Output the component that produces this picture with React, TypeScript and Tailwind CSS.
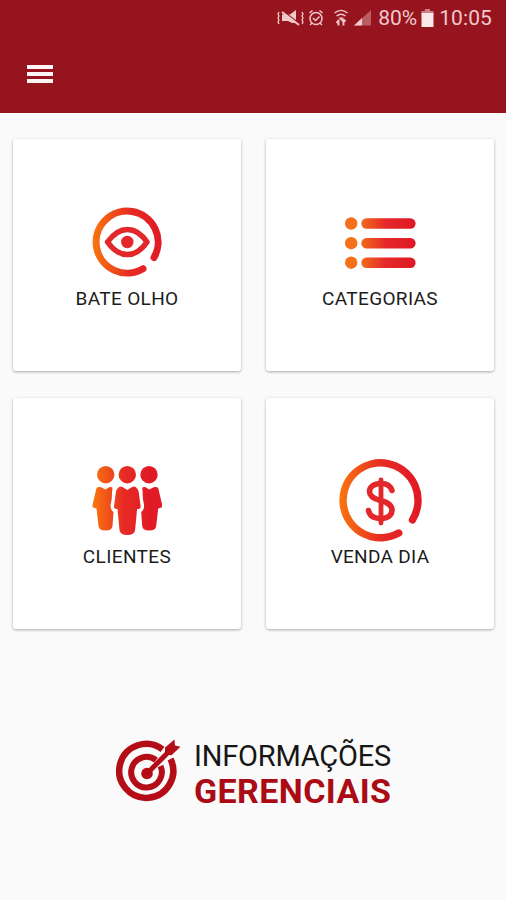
import type { ReactNode } from 'react'

/**
 * Home - main menu with the four report cards
 */

function StatusBar() {
  return (
    <div className="flex h-9 items-center justify-end pr-[14px] text-[#f0c9cc]">
      <svg className="h-5 w-[96px] shrink-0" viewBox="0 0 96 20" fill="none" stroke="currentColor" strokeWidth="1.5">
        {/* Mute + vibrate */}
        <path d="M2 4l-1 2 1 2-1 2 1 2-1 2 1 2M25 4l1 2-1 2 1 2-1 2 1 2-1 2" strokeWidth="1.300" />
        <path d="M5 6.500h4l4 0 6-4.500v13l-4 0-4-2H5z" fill="currentColor" stroke="none" />
        <path d="M6 3l17 13" stroke="#96141e" strokeWidth="1.200" />
        <path d="M5 4l17 13" strokeWidth="2" />
        {/* Alarm */}
        <circle cx="39" cy="10.500" r="6" />
        <path d="M36 10l2.500 2.500 4-4M32.500 5l3-2.500M45.500 5l-3-2.500M35 15l-2 2M43 15l2 2" />
        {/* Wifi */}
        <path d="M57.500 5c4-3.300 9-3.300 13 0M59.500 8c3-2.300 6-2.300 9 0" strokeWidth="1.300" />
        <path d="M61.500 9.500h5l-2.500 3z" fill="currentColor" stroke="none" />
        <path d="M61.500 11.500v6M59.500 15l2-2.500M66.500 17.500v-6M64.500 13l2-1.500 2 2" strokeWidth="1.900" />
        {/* Signal */}
        <path d="M94 2v15.500H77z" fill="currentColor" opacity=".4" stroke="none" />
        <path d="M85 10v7.500h-8z" fill="currentColor" stroke="none" />
      </svg>
      <span className="ml-[5px] text-[21px] leading-9">80%</span>
      <svg className="ml-[4px] h-[18px] w-[13px] shrink-0" viewBox="0 0 13 18">
        <path d="M4 0h5v2h3.500v4H.5V2H4z" fill="currentColor" opacity=".6" />
        <path d="M.5 4h12v14H.5z" fill="#fbe9ea" />
      </svg>
      <span className="ml-[5px] text-[21px] leading-9 tracking-[0.1px]">10:05</span>
    </div>
  )
}

function Gradient({ id, from, to }: { id: string; from: number; to: number }) {
  return (
    <defs>
      <linearGradient id={id} gradientUnits="userSpaceOnUse" x1={from} x2={to} y1="0" y2="0">
        <stop offset="0" stopColor="#f9780e" />
        <stop offset=".55" stopColor="#e72b24" />
        <stop offset="1" stopColor="#e11a25" />
      </linearGradient>
    </defs>
  )
}

function EyeIcon() {
  return (
    <svg className="h-[70px] w-[70px]" viewBox="0 0 70 70" fill="none" stroke="url(#eye)" strokeLinecap="round">
      <Gradient id="eye" from={0} to={70} />
      <path d="M62 50.500A31 31 0 1 0 51 61.700" strokeWidth="7" />
      <g stroke="#e3272a">
        <path d="M15.500 35c12-16.800 28-16.800 39.500 0c-11.500 16.800-27.500 16.800-39.500 0z" strokeWidth="5.500" strokeLinejoin="round" />
        <circle cx="35.300" cy="35" r="6.200" fill="#e3272a" stroke="none" />
      </g>
    </svg>
  )
}

function ListIcon() {
  return (
    <svg className="mt-[2px] h-[52px] w-[72px]" viewBox="0 0 72 52">
      <defs>
        <linearGradient id="bar">
          <stop offset="0" stopColor="#f26a1b" />
          <stop offset=".45" stopColor="#e5282a" />
          <stop offset="1" stopColor="#e01725" />
        </linearGradient>
      </defs>
      {[6.5, 26.2, 45.7].map((y) => (
        <g key={y}>
          <circle cx="7.200" cy={y} r="6.200" fill="#f6701a" />
          <rect x="17.300" y={y - 5.2} width="54.300" height="10.400" rx="5.200" fill="url(#bar)" />
        </g>
      ))}
    </svg>
  )
}

function PeopleIcon() {
  return (
    <svg className="h-[72px] w-[70px]" viewBox="0 0 70 72" fill="url(#people)">
      <Gradient id="people" from={0} to={58} />
      <circle cx="13.700" cy="9.700" r="8.700" />
      <circle cx="35.300" cy="9.700" r="8.700" />
      <circle cx="57" cy="9.700" r="8.700" />
      <path d="M4.500 23q1.500-1.500 4-1L13.500 24.500l4-2.500q2.500-.5 3 1c-1 5 0 10-1.500 15-1 4 0 7 2.500 9l-1 14q-.5 4.500-7 4.500t-7-4.500l-2-17.500-3-1q-1.500-.5-1-2.500z" />
      <path d="M66.200 23q-1.500-1.500-4-1L57.200 24.500l-4-2.500q-2.500-.5-3 1c1 5 0 10 1.500 15 1 4 0 7-2.500 9l1 14q.5 4.500 7 4.500t7-4.500l2-17.500 3-1q1.500-.5 1-2.500z" />
      <path d="M26.500 22.500q1.500-1.500 4-.5l4.800 3 4.800-3q2.500-1 4 .5 2 1.500 2.500 4l2 14.500q.3 3-3.500 3l-2 21q-.5 5-7.800 5t-7.800-5l-2-21q-3.800 0-3.500-3l2-14.500q.5-2.500 2.500-4z" />
    </svg>
  )
}

function DollarIcon() {
  return (
    <svg className="h-[84px] w-[84px]" viewBox="0 0 84 84" fill="none" stroke="url(#dollar)" strokeLinecap="round">
      <Gradient id="dollar" from={0} to={80} />
      <path d="M74.500 60.900A37.500 37.500 0 1 0 60.700 74.100" strokeWidth="7.400" />
      <g stroke="#e3272a">
        <path d="M54 31.500c-1.500-5-5.500-7-11-7-7 0-11.500 3.500-11.500 8 0 5.500 5 7.500 11 9 7 1.800 11.500 4 11.500 9.500 0 5-4 8.500-11 8.500-7 0-11.500-3-12.500-8" strokeWidth="5.600" />
        <path d="M43 21v43" strokeWidth="4.800" />
      </g>
    </svg>
  )
}

function TargetIcon() {
  return (
    <svg className="h-[66px] w-[65px] shrink-0" viewBox="0 0 65 66" fill="none" stroke="#b40d17">
      <path d="M46.500 10.300A27 27 0 1 0 54.500 20" strokeWidth="6.500" />
      <path d="M40 21.200A15.300 15.300 0 1 0 44.500 27" strokeWidth="6" />
      <circle cx="31" cy="34.500" r="5.800" fill="#b40d17" stroke="none" />
      <path d="M31 34.500l23-23" strokeWidth="5" />
      <path d="M49 8.500L58.500.5l.5 6 5.500 1.300-9 8.500-6.500-1z" fill="#b40d17" stroke="none" />
    </svg>
  )
}

interface MenuCardProps {
  label: string
  icon: ReactNode
  textClass: string
}

function MenuCard({ label, icon, textClass }: MenuCardProps) {
  return (
    <button className="flex flex-col items-center rounded-[3px] bg-white pt-[60px] shadow-[0_1px_3px_rgba(0,0,0,0.32)]">
      <span className="flex h-[86px] items-center justify-center">{icon}</span>
      <span className={`whitespace-nowrap text-[19px] leading-[24px] text-[#1c1c1c] ${textClass}`}>{label}</span>
    </button>
  )
}

export default function App() {
  return (
    <div className="flex h-[900px] w-[506px] flex-col overflow-hidden bg-[#fafafa] font-['Roboto',sans-serif]">
      <header className="h-[113px] shrink-0 bg-[#96141e]">
        <StatusBar />
        <button className="ml-[27px] mt-[29px] flex w-[26px] flex-col gap-[3px]" aria-label="Menu">
          <span className="h-1 w-full bg-[#fff5f5]" />
          <span className="h-1 w-full bg-[#fff5f5]" />
          <span className="h-1 w-full bg-[#fff5f5]" />
        </button>
      </header>

      <main className="grid grid-cols-[228px_228px] grid-rows-[232px_231px] gap-x-[25px] gap-y-[27px] pl-[13px] pt-[26px]">
        <MenuCard label="BATE OLHO" icon={<EyeIcon />} textClass="mt-[2px] tracking-[0.350px]" />
        <MenuCard label="CATEGORIAS" icon={<ListIcon />} textClass="mt-[2px] tracking-[0.350px]" />
        <MenuCard label="CLIENTES" icon={<PeopleIcon />} textClass="mt-[1px] tracking-[0.400px]" />
        <MenuCard label="VENDA DIA" icon={<DollarIcon />} textClass="mt-[1px] tracking-[0.300px]" />
      </main>

      {/* Brand */}
      <footer className="mt-[110px] flex pl-[116px]">
        <TargetIcon />
        <div className="ml-[13px] flex flex-col">
          <span className="whitespace-nowrap text-[29px] leading-[34px] tracking-[-0.200px] text-[#161616]">INFORMAÇÕES</span>
          <span className="whitespace-nowrap text-[34px] font-bold leading-[36px] tracking-[0.400px] text-[#ab0b15]">GERENCIAIS</span>
        </div>
      </footer>
    </div>
  )
}
